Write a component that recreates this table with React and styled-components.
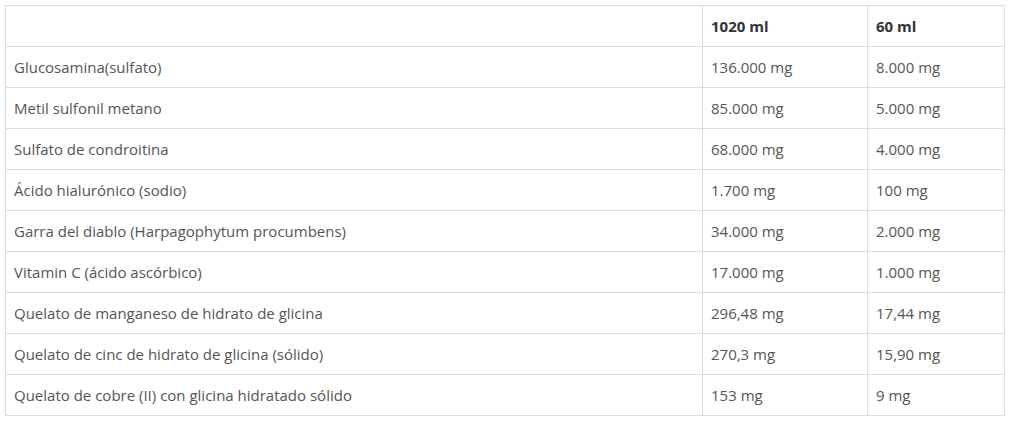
import React from "react";
import styled, { createGlobalStyle } from "styled-components";

const Global = createGlobalStyle`
  html, body { margin: 0; padding: 0; background: #fff; }
  body { font-family: "Open Sans", "Noto Sans", sans-serif; }
`;

const Wrap = styled.div`
  padding: 5px;
`;

const Table = styled.table`
  width: 999px;
  border-collapse: collapse;
  table-layout: fixed;
  font-family: "Open Sans", "Noto Sans", sans-serif;
  font-size: 15px;
  color: #555;
`;

const Cell = styled.td`
  height: 41px;
  box-sizing: border-box;
  padding: 0 8px;
  border: 1px solid #ddd;
  vertical-align: middle;
  text-align: left;
  line-height: 20px;
  font-weight: ${(p) => (p.$head ? 700 : 400)};
  color: ${(p) => (p.$head ? "#333" : "#555")};
`;

const rows = [
  ["Glucosamina(sulfato)", "136.000 mg", "8.000 mg"],
  ["Metil sulfonil metano", "85.000 mg", "5.000 mg"],
  ["Sulfato de condroitina", "68.000 mg", "4.000 mg"],
  ["Ácido hialurónico (sodio)", "1.700 mg", "100 mg"],
  ["Garra del diablo (Harpagophytum procumbens)", "34.000 mg", "2.000 mg"],
  ["Vitamin C (ácido ascórbico)", "17.000 mg", "1.000 mg"],
  ["Quelato de manganeso de hidrato de glicina", "296,48 mg", "17,44 mg"],
  ["Quelato de cinc de hidrato de glicina (sólido)", "270,3 mg", "15,90 mg"],
  ["Quelato de cobre (II) con glicina hidratado sólido", "153 mg", "9 mg"],
];

export default function App() {
  return (
    <Wrap>
      <Global />
      <Table>
        <colgroup>
          <col style={{ width: 697 }} />
          <col style={{ width: 165 }} />
          <col style={{ width: 137 }} />
        </colgroup>
        <tbody>
          <tr>
            <Cell $head></Cell>
            <Cell $head>1020 ml</Cell>
            <Cell $head>60 ml</Cell>
          </tr>
          {rows.map((r) => (
            <tr key={r[0]}>
              {r.map((c, i) => (
                <Cell key={i}>{c}</Cell>
              ))}
            </tr>
          ))}
        </tbody>
      </Table>
    </Wrap>
  );
}
